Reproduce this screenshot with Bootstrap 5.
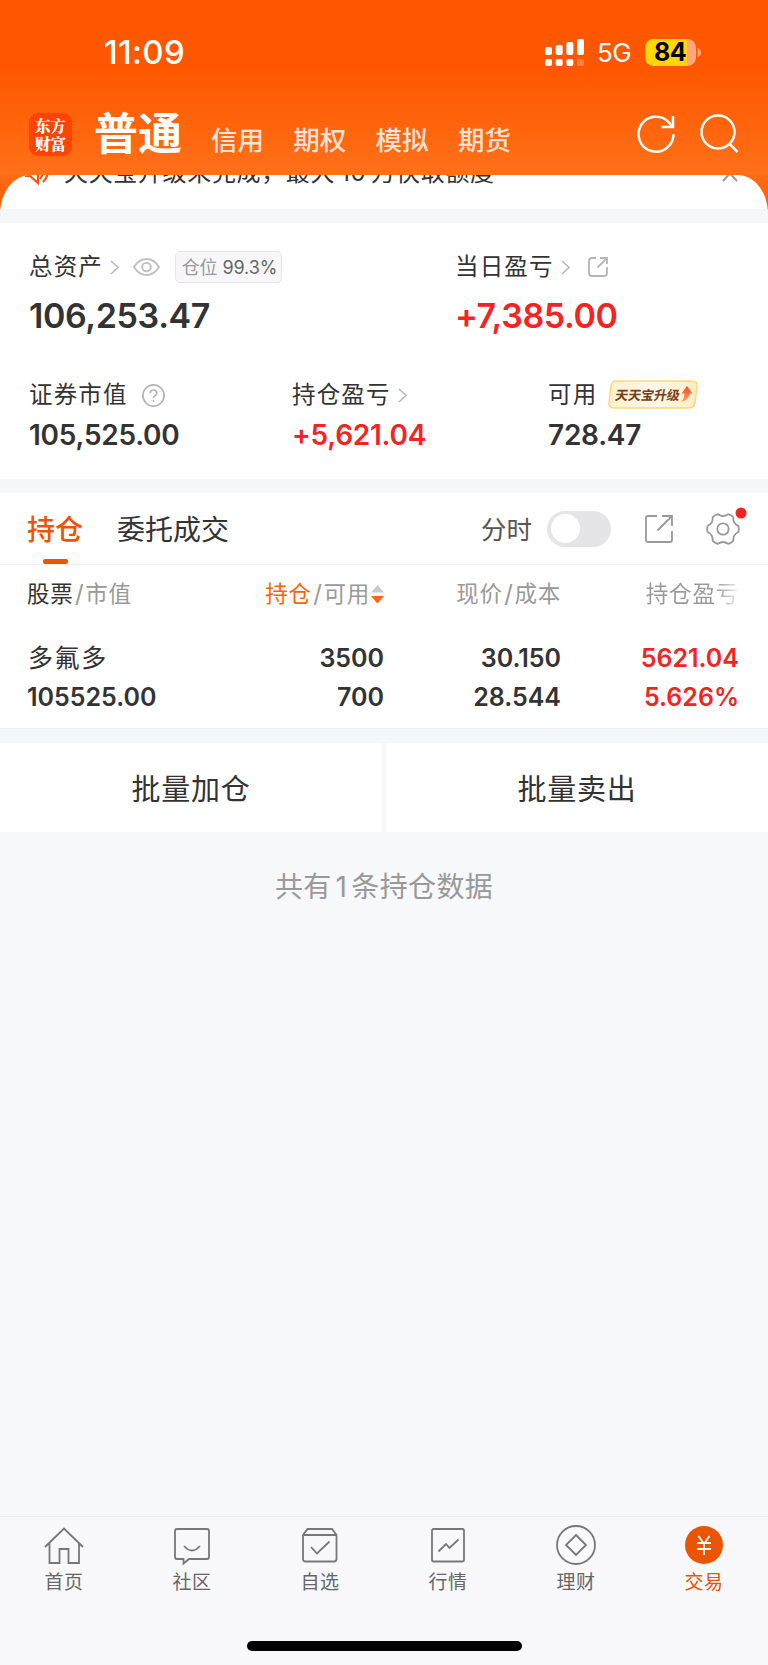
<!DOCTYPE html>
<html lang="zh-CN">
<head>
<meta charset="utf-8">
<meta name="viewport" content="width=device-width, initial-scale=1">
<title>普通交易</title>
<link href="https://cdn.jsdelivr.net/npm/bootstrap@5.3.0/dist/css/bootstrap.min.css" rel="stylesheet">
<script src="https://cdn.jsdelivr.net/npm/bootstrap@5.3.0/dist/js/bootstrap.bundle.min.js"></script>
<style>
html,body{height:1665px;overflow:hidden}
body{font-family:Inter,"Noto Sans CJK SC",sans-serif;color:#333;background:#f7f8fa;white-space:nowrap}
svg{display:block;flex:none;overflow:visible;fill:none}
.screen{height:1665px;background:#f7f8fa}
.hero{height:175px;background:linear-gradient(#ff5700 0,#ff5700 68px,#ff7018 172px)}
.under{background:linear-gradient(#ff6c14,#ff5a04 40px,#f7f8fa 40px)}
.status{height:98px;padding:6px 67px 0 104px}
.clock{font-size:33px;font-weight:500;letter-spacing:.3px;padding-top:2px}
.net{font-size:26px;font-weight:400;letter-spacing:-.6px;width:33px;margin-left:13px;padding-top:1px}
.battery{width:51px;height:27px;margin-left:15px;border-radius:8.5px;background:linear-gradient(90deg,#ffd60a 83%,#ffa67c 83%);color:#000;font-size:25px;font-weight:700;line-height:27px;padding-left:9px;letter-spacing:-.6px}
.topnav{height:77px;padding:0 30px 5px 29px}
.logo{width:43px;height:43px;border-radius:9px;background:#ff4300;color:#fff;font-family:"Noto Serif CJK SC","Noto Sans CJK SC",serif;font-weight:900;font-size:15.5px;line-height:18px;padding-top:3px}
.main-tab{font-size:44px;font-weight:700;line-height:60px;margin-left:22px;width:117px;padding-bottom:1px}
.sub-tab{font-size:26.5px;font-weight:500;color:rgba(255,255,255,.82);line-height:40px;width:82.3px;padding-top:12px}
.sheet{border-radius:30px 30px 0 0/39px 39px 0 0;overflow:hidden;background:#fff}
.notice{height:34px;padding:0 30px 0 24px}
.notice>*{margin-top:-20px}
.notice .notice-text{font-size:24px;letter-spacing:.65px;line-height:36px;margin-left:15px}
.notice .horn{margin-top:-18px}
.band{background:#f6f7f9}
.assets{height:256px;padding:25px 0 0 29px}
.label{font-size:23.5px;letter-spacing:1.15px;line-height:38px;height:38px}
.big{font-size:34px;font-weight:600;line-height:50px;height:50px;padding-top:5px;letter-spacing:-.38px}
.mid{font-size:28px;font-weight:600;line-height:42px;height:40px;letter-spacing:-.25px}
.up{color:#f62323}
.position-tag{width:107px;height:32px;border:1.5px solid #e6e6ea;border-radius:5px;background:#f7f7fa;font-size:18px;color:#666;letter-spacing:-.1px;margin-left:15px;padding:2px 0 0 2px}
.promo{width:90px;height:29px;margin:-2px 0 0 11px}
.promo-text{font-size:13px;font-weight:700;fill:#753f1c}
.tabs{height:71px;padding:0 27px 0 27px}
.tab-on{color:#ea5504;font-size:28px;font-weight:500;width:90px;padding-top:3px}
.tab-on i{width:25px;height:5px;border-radius:2px;background:#ea5504;left:16px;bottom:0}
.tab-off{font-size:28px;padding-top:3px}
.toggle{width:64px;height:36px;border-radius:18px;background:#e5e5e7;padding:3.5px}
.toggle i{width:29px;height:29px;border-radius:50%;background:#fff}
.holdings{border-top:1px solid #efeff1;height:164px}
.line{display:grid;grid-template-columns:157px 200px 177px 178px;padding-left:27px}
.line>*{text-align:right}
.line>:first-child{text-align:left}
.head-line{font-size:22.5px;letter-spacing:.8px;color:#999;height:58px;line-height:58px}
.nums{font-size:25px;font-weight:600;height:39px;line-height:39px}
.fade-out{color:transparent;background:linear-gradient(90deg,#999 75%,#eee 100%);-webkit-background-clip:text;background-clip:text}
.slash{font-size:24px;margin:0 1.5px;letter-spacing:0}
.batch{height:89px;font-size:29px;letter-spacing:.8px;gap:4px;background:#f8f8fa}
.batch a{color:#333;background:#fff;padding-top:4px}
.count{font-size:28px;color:#999;letter-spacing:.35px;line-height:40px;padding-top:35px}
.dock{height:149px;border-top:1px solid #e9e9ec;background:#f8f8fb;font-size:19px;letter-spacing:.5px;color:#666}
.dock a{color:inherit;height:84px;padding-top:8px;line-height:32px}
.dock .active{color:#ea5504}
.home{width:275px;height:10px;border-radius:5px;background:#000;margin-top:40px}
</style>
</head>
<body>
<div class="screen d-flex flex-column">
  <header class="hero text-white">
    <div class="status d-flex align-items-center">
      <span class="clock me-auto">11:09</span>
      <svg width="39" height="27"><g fill="#fff"><rect y="8" width="7" height="8" rx="2"/><rect x="10.7" y="6" width="7" height="10" rx="2"/><rect x="21.4" y="3" width="7" height="13" rx="2"/><rect x="32" width="7" height="16" rx="2"/><rect y="20" width="7" height="7" rx="2"/><rect x="10.7" y="20" width="7" height="7" rx="2"/><rect x="21.4" y="20" width="7" height="7" rx="2"/><rect x="32" y="20" width="7" height="7" rx="2" opacity=".25"/></g></svg>
      <span class="net">5G</span>
      <div class="battery">84</div>
      <svg width="5" height="9"><path d="M1.5 0Q5 1 5 4.500T1.500 9Z" fill="#ffa67c"/></svg>
    </div>
    <nav class="topnav d-flex align-items-center">
      <div class="logo text-center">东方<br>财富</div>
      <span class="main-tab">普通</span>
      <span class="sub-tab">信用</span><span class="sub-tab">期权</span><span class="sub-tab">模拟</span><span class="sub-tab">期货</span>
      <svg class="ms-auto" width="37" height="38" stroke="#fff" stroke-width="2.5"><path d="M35.500 19A17.500 17.500 0 1 1 31 7.500L34 11.500M35 1V12H23.500"/></svg>
      <svg style="margin-left:25px" width="38" height="38" stroke="#fff" stroke-width="2.500"><circle cx="18" cy="17" r="16.500"/><path d="M29 28.500 37.500 37"/></svg>
    </nav>
  </header>
  <main class="under">
    <div class="sheet">
      <div class="notice d-flex align-items-start">
        <svg class="horn" width="25" height="30" stroke="#f25510" stroke-width="2.200"><path d="M1 19H6L14 26V2M18 9Q21 15 16 22M22 6Q27 17 19 25"/></svg>
        <span class="notice-text">天天宝升级未完成，最大&#8201;10&#8201;万快取额度</span>
        <svg class="ms-auto" width="16" height="28" stroke="#999" stroke-width="2"><path d="M1 11 15 26M15 11 1 26"/></svg>
      </div>
      <div class="band" style="height:14px"></div>
      <section class="assets">
        <div class="d-flex">
          <div style="width:426px">
            <div class="label d-flex align-items-center">总资产
              <svg style="margin-left:7px" width="9" height="15" stroke="#bbb" stroke-width="1.700"><path d="M1 1 8 7.500 1 14"/></svg>
              <svg style="margin-left:14px" width="27" height="18" stroke="#c2c2c2" stroke-width="2"><path d="M1 9Q6 1 13.500 1T26 9Q21 17 13.500 17T1 9Z"/><circle cx="13.500" cy="9" r="4.300"/></svg>
              <span class="position-tag d-flex align-items-center justify-content-center"><span style="color:#999">仓位</span>&nbsp;99.3%</span>
            </div>
            <div class="big">106,253.47</div>
          </div>
          <div>
            <div class="label d-flex align-items-center">当日盈亏
              <svg style="margin-left:7px" width="9" height="15" stroke="#bbb" stroke-width="1.700"><path d="M1 1 8 7.500 1 14"/></svg>
              <svg style="margin-left:18px" width="20" height="20" stroke="#b5b5b5" stroke-width="1.800"><path d="M8 1H4Q1 1 1 4V16Q1 19 4 19H16Q19 19 19 16V10M12 1H19V7M19 1 9.500 10.500"/></svg>
            </div>
            <div class="big up">+7,385.00</div>
          </div>
        </div>
        <div class="d-flex" style="margin-top:40px">
          <div style="width:263px">
            <div class="label d-flex align-items-center">证券市值
              <svg style="margin-left:14px" width="23" height="23" stroke="#b5b5b5" stroke-width="1.700"><circle cx="11.500" cy="11.500" r="10.600"/><path d="M8.200 9.300Q8.300 6 11.500 6T14.800 9.100Q14.800 10.500 13 11.700T11.500 14.200M11.500 16V17.800"/></svg>
            </div>
            <div class="mid">105,525.00</div>
          </div>
          <div style="width:256px">
            <div class="label d-flex align-items-center">持仓盈亏
              <svg style="margin-left:7px" width="9" height="15" stroke="#bbb" stroke-width="1.700"><path d="M1 1 8 7.500 1 14"/></svg>
            </div>
            <div class="mid up">+5,621.04</div>
          </div>
          <div>
            <div class="label d-flex align-items-center">可用
              <svg class="promo" viewBox="0 0 90 29"><defs><linearGradient id="gold"><stop stop-color="#fff0cf"/><stop offset=".5" stop-color="#fff8e8"/><stop offset="1" stop-color="#ffedc4"/></linearGradient><linearGradient id="flame" x2="0" y2="1"><stop stop-color="#ff4524"/><stop offset="1" stop-color="#ffa45e"/></linearGradient></defs><path d="M8 1H84Q90 1 89 7L87 23Q86 28 81 28H6Q0 28 1 22L3 6Q4 1 8 1Z" fill="url(#gold)" stroke="#ffd77c" stroke-width="1.500"/><text class="promo-text" transform="translate(6.500 19.700) skewX(-10)" letter-spacing="-.1">天天宝升级</text><path d="M79 6 84.500 13.500H81.700Q81 20 73 22Q76.500 18 76.500 13.500H73.500Z" fill="url(#flame)"/></svg>
            </div>
            <div class="mid">728.47</div>
          </div>
        </div>
      </section>
    </div>
  </main>
  <div class="band" style="height:14px"></div>
  <section class="bg-white">
    <div class="tabs d-flex align-items-center">
      <div class="tab-on position-relative h-100 d-flex align-items-center">持仓<i class="position-absolute"></i></div>
      <span class="tab-off me-auto">委托成交</span>
      <span style="font-size:25.500px;color:#555;padding-top:3px">分时</span>
      <div class="toggle" style="margin-left:15px"><i class="d-block"></i></div>
      <svg style="margin-left:34px" width="28" height="28" stroke="#999" stroke-width="1.800"><path d="M12 1H3Q1 1 1 3V25Q1 27 3 27H25Q27 27 27 25V16M17 1H27V11M27 1 12.500 15.500"/></svg>
      <div class="position-relative" style="margin-left:32px">
        <svg width="36" height="34" viewBox="-18 -17 36 34" stroke="#999" stroke-width="1.800"><path d="M15.400-3Q16.300 0 15.400 3Q9.700 5.600 10.300 11.850Q8.100 14.100 5.100 14.850Q0 11.200-5.100 14.850Q-8.100 14.100-10.300 11.850Q-9.700 5.600-15.400 3Q-16.300 0-15.400-3Q-9.700-5.600-10.300-11.850Q-8.100-14.100-5.100-14.850Q0-11.200 5.100-14.850Q8.100-14.100 10.300-11.850Q9.700-5.600 15.400-3Z"/><circle r="5.700"/></svg>
        <svg class="position-absolute" style="right:-6px;top:-5px" width="12" height="12"><circle cx="6" cy="6" r="5.500" fill="#f62323"/></svg>
      </div>
    </div>
    <div class="holdings">
      <div class="line head-line">
        <div><span style="color:#333">股票</span><span class="slash">/</span>市值</div>
        <div class="d-flex justify-content-end align-items-center"><span style="color:#fa6400">持仓</span><span class="slash">/</span>可用<svg style="margin-left:1px" width="13" height="20"><path d="M6.500 1 13 8.500H0Z" fill="#c9c9c9"/><path d="M0 12H13L6.500 19.500Z" fill="#fa6414"/></svg></div>
        <div>现价<span class="slash">/</span>成本</div>
        <div><span class="fade-out">持仓盈亏</span></div>
      </div>
      <div class="line nums" style="margin-top:16px"><div style="font-weight:400;letter-spacing:1.600px;padding-left:1px">多氟多</div><div>3500</div><div>30.150</div><div class="up">5621.04</div></div>
      <div class="line nums"><div>105525.00</div><div>700</div><div>28.544</div><div class="up">5.626%</div></div>
    </div>
  </section>
  <div class="band border-top" style="height:15px;border-color:#eee!important"></div>
  <div class="batch d-flex">
    <a class="flex-fill w-50 d-flex align-items-center justify-content-center text-decoration-none">批量加仓</a>
    <a class="flex-fill w-50 d-flex align-items-center justify-content-center text-decoration-none">批量卖出</a>
  </div>
  <div class="count text-center">共有<span class="mx-1">1</span>条持仓数据</div>
  <nav class="dock mt-auto">
    <div class="row row-cols-6 g-0 text-center">
      <a class="col d-flex flex-column align-items-center text-decoration-none"><svg width="40" height="42" stroke="#777" stroke-width="1.800"><path d="M1 22 20 3.500 39 22M5.500 18V38H15.500V24H24.500V38H35V18"/></svg>首页</a>
      <a class="col d-flex flex-column align-items-center text-decoration-none"><svg width="36" height="42" stroke="#777" stroke-width="1.800"><path d="M3 4H33Q35 4 35 6V32Q35 34 33 34H15L9.500 38.500V34H3Q1 34 1 32V6Q1 4 3 4ZM10 21Q18 30 26 21"/></svg>社区</a>
      <a class="col d-flex flex-column align-items-center text-decoration-none"><svg width="36" height="42" stroke="#777" stroke-width="1.800"><path d="M1 10 5.500 4H30L34.500 10V34Q34.500 36.500 32 36.500H3.500Q1 36.500 1 34ZM1 10H34.500M9 22 15 28.500 27.500 16.500"/></svg>自选</a>
      <a class="col d-flex flex-column align-items-center text-decoration-none"><svg width="34" height="42" stroke="#777" stroke-width="1.800"><rect x="1" y="4" width="32" height="32.500" rx="1.500"/><path d="M7.500 26.500 15 19 18.500 23 27.500 14.500"/></svg>行情</a>
      <a class="col d-flex flex-column align-items-center text-decoration-none"><svg width="40" height="42" stroke="#777" stroke-width="1.800"><circle cx="20" cy="20" r="19"/><path d="M20 10 30 20 20 30 10 20Z"/></svg>理财</a>
      <a class="col active d-flex flex-column align-items-center text-decoration-none"><svg width="38" height="42"><circle cx="19" cy="20" r="19" fill="#ea5504"/><path d="M13.500 11 19 19 24.500 11M12 18H26M12 24H26M19 18V30" stroke="#fff" stroke-width="1.800"/></svg>交易</a>
    </div>
    <div class="home mx-auto"></div>
  </nav>
</div>
</body>
</html>
